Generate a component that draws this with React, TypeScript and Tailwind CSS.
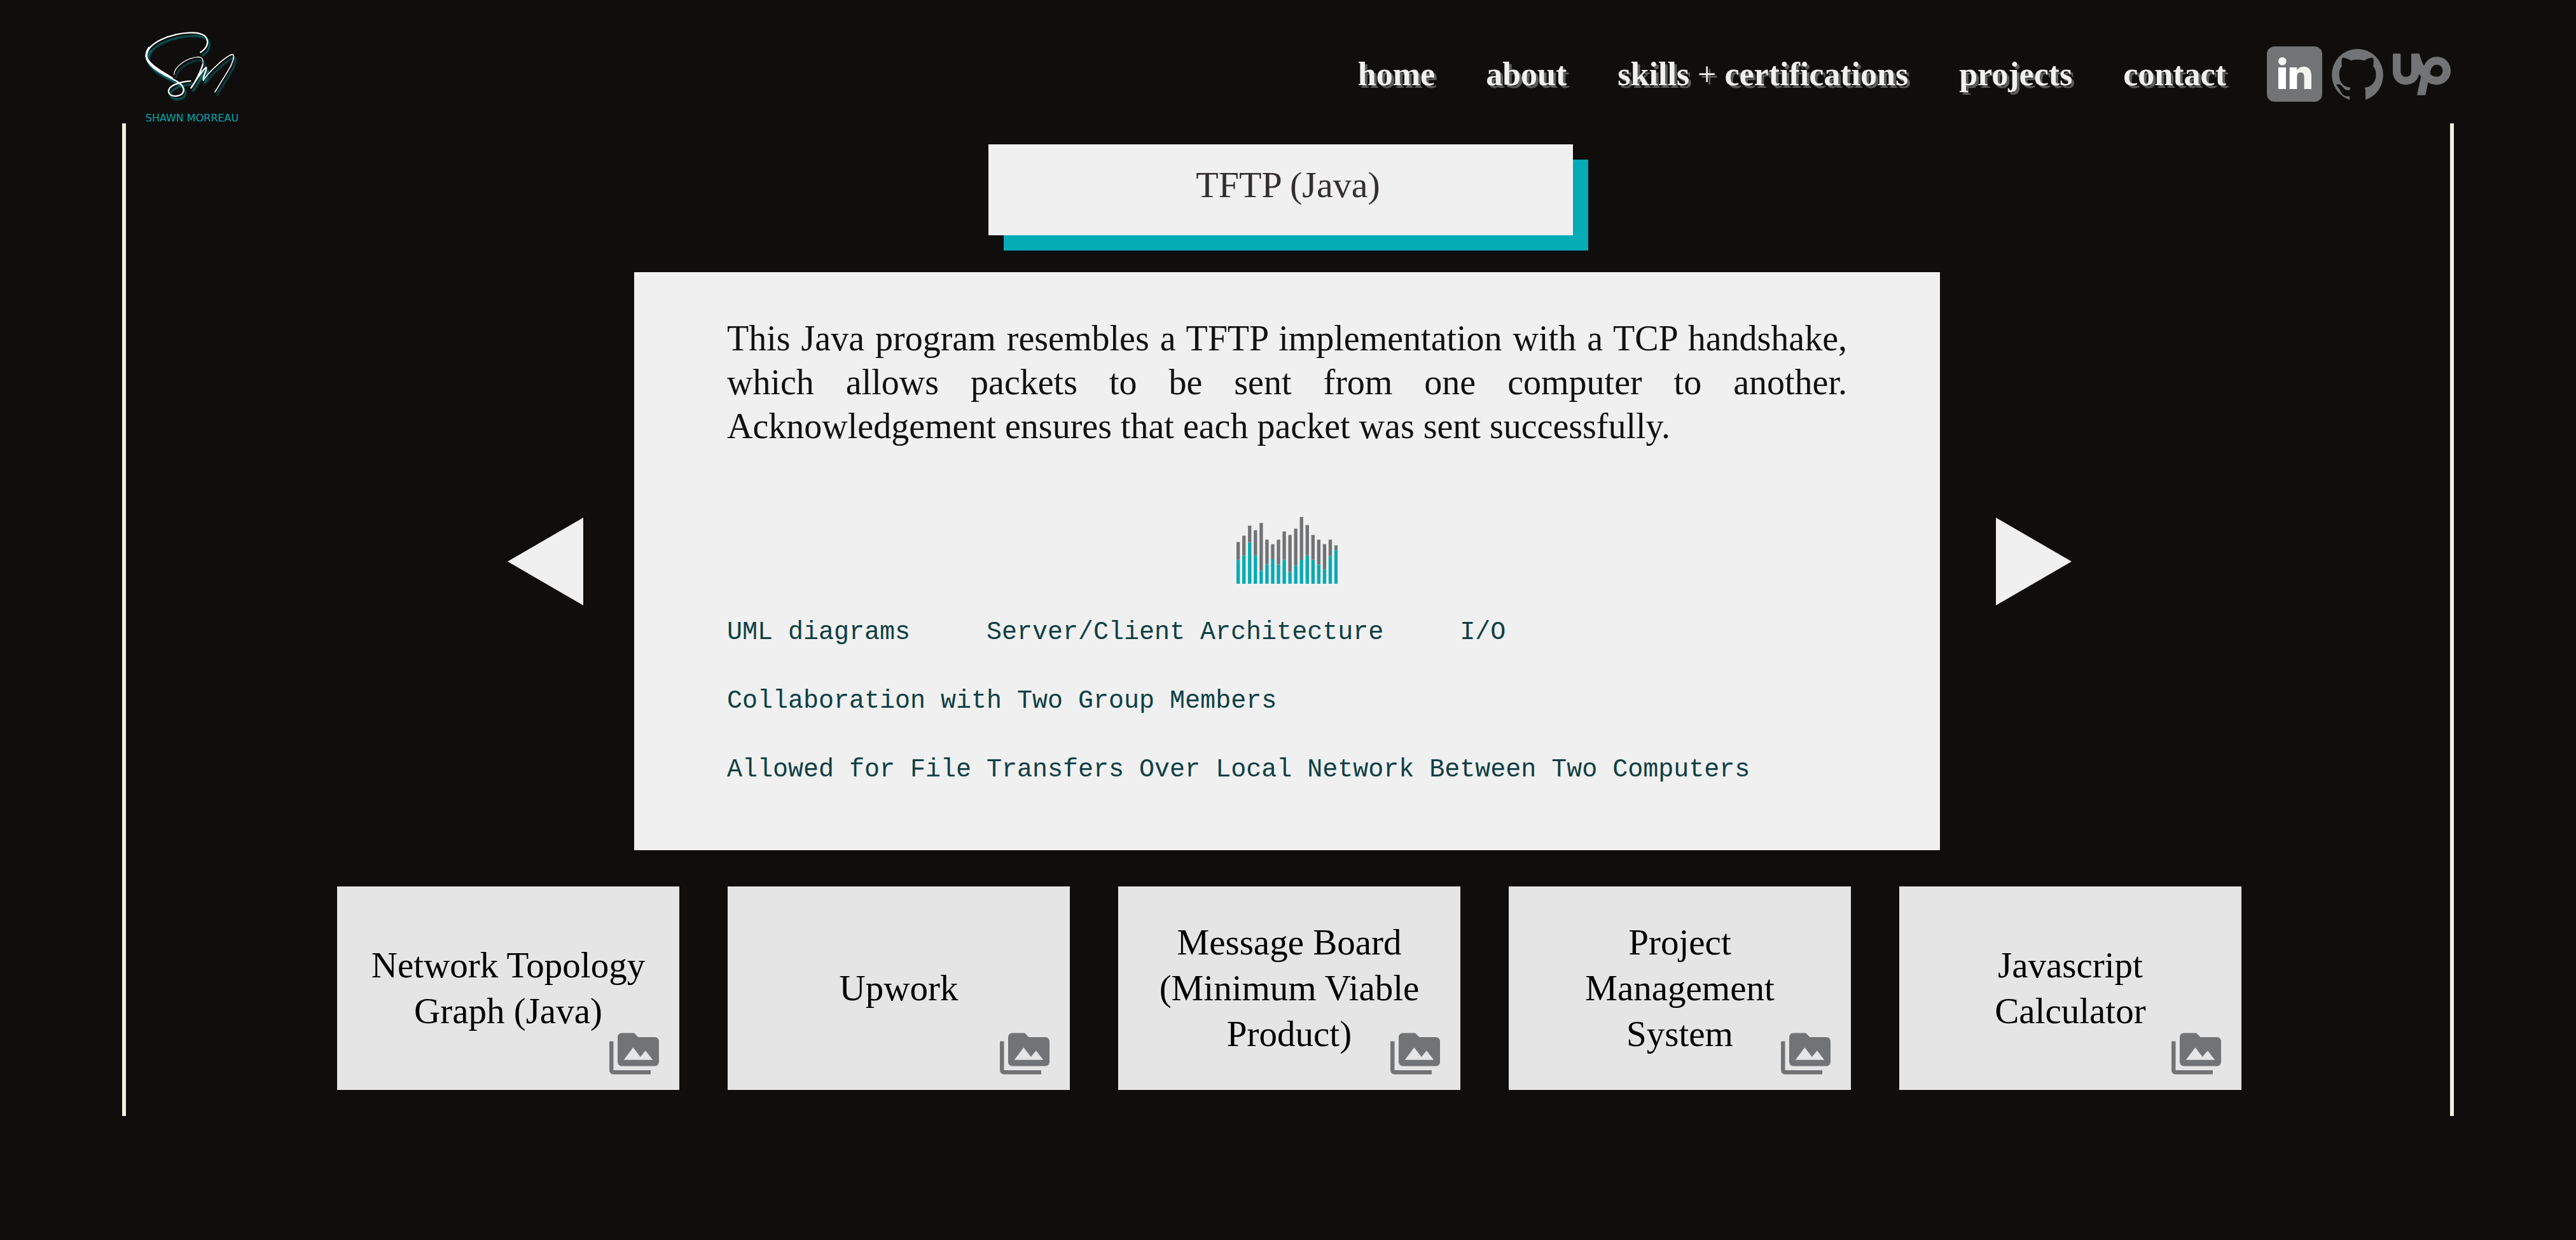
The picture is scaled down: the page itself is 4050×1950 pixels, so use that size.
import { MdPermMedia } from "react-icons/md";

const navLinks = ["home", "about", "skills + certifications", "projects", "contact"];

const skills = [
  "UML diagrams",
  "Server/Client Architecture",
  "I/O",
  "Collaboration with Two Group Members",
  "Allowed for File Transfers Over Local Network Between Two Computers",
];

const projects = [
  "Network Topology Graph (Java)",
  "Upwork",
  "Message Board (Minimum Viable Product)",
  "Project Management System",
  "Javascript Calculator",
];

// [top of the bar, top of its teal part]
const bars = [
  [216, 301], [186, 280], [139, 217], [160, 280], [126, 352], [205, 322],
  [226, 296], [205, 322], [166, 301], [183, 358], [153, 328], [98, 299],
  [136, 280], [183, 301], [205, 322], [226, 346], [205, 283], [232, 253],
];

function Logo() {
  return (
    <a href="#home" aria-label="Shawn Morreau, home" className="flex flex-col items-center gap-[18px] pt-12">
      <svg
        viewBox="168 84 456 336"
        fill="none"
        stroke="#ffffff"
        strokeLinecap="round"
        strokeLinejoin="round"
        className="h-28 w-[152px] drop-shadow-[3px_5px_1px_#07767c]"
      >
        <path
          strokeWidth="7"
          d="M436 187C462 170 471 150 468 132C464 105 440 94 392 94C300 96 182 140 180 206C182 262 285 298 330 328C364 350 368 388 322 393C278 396 272 358 312 340C335 330 362 324 388 322"
        />
        <path strokeWidth="10" d="M193 166C183 180 180 192 180 206C183 238 240 272 300 308" />
        <path strokeWidth="4" d="M311 291C312 255 370 212 425 209C448 210 450 228 446 245" />
        <path strokeWidth="7" d="M446 245C438 275 410 330 391 355C410 325 450 265 463 258C466 275 446 300 449 318" />
        <path strokeWidth="5" d="M449 318C470 285 560 198 588 197C598 203 588 240 565 275L504 374" />
      </svg>
      <span className="font-['DejaVu_Sans',sans-serif] text-base/4 whitespace-nowrap text-[#05a3ac]">SHAWN MORREAU</span>
    </a>
  );
}

function LinkedInIcon() {
  return (
    <svg viewBox="42 39 261 261" className="size-[87px]">
      <rect x="42" y="39" width="261" height="261" rx="36" fill="#727375" />
      <circle cx="115" cy="109" r="19" fill="#f4f5ee" />
      <path fill="#ffffff" d="M96 138h36v102H96zM149 138h35v102h-35z" />
      <path
        fill="#f4f5ee"
        d="M183 152C190 140 202 134 215 134C240 134 252 150 252 178V240H218V184C218 170 214 161 201 161C189 161 184 170 184 184Z"
      />
    </svg>
  );
}

function GitHubIcon() {
  return (
    <svg viewBox="347 50 244 242" className="h-20 w-[81px]" fill="#727375">
      <path d="M507 292V250C507 244 505 238 503 234C540 228 557 205 557 170C557 155 552 142 543 131C546 120 547 108 543 93C540 90 528 90 500 105C480 99 458 99 438 105C410 90 398 90 396 93C392 108 392 120 395 131C386 142 382 155 382 170C382 210 400 229 436 234C434 238 433 242 432 246C424 247 412 246 405 238C396 226 388 218 376 218C369 218 368 224 372 228C384 236 386 252 396 264C404 275 418 276 432 275V292C385 276 347 232 347 172A122 122 0 0 1 591 172C591 230 555 277 507 292Z" />
    </svg>
  );
}

function UpworkIcon() {
  return (
    <svg viewBox="636 72 273 197" className="h-[66px] w-[91px]" fill="#727375" fillRule="evenodd">
      <path d="M636 76Q636 72 640 72H669Q673 72 673 76V156C673 172 684 182 698 182C713 182 723 172 723 156V76Q723 72 727 72H761C766 92 773 113 783 130C794 104 815 87 844 87C881 87 909 116 909 153C909 190 880 219 843 219C827 219 813 215 802 207L791 265Q790 269 786 269H750L769 180C766 177 763 173 760 169C754 200 730 219 698 219C662 219 636 193 636 156ZM844 125C824 125 814 142 812 168C820 177 830 181 843 181C860 181 871 169 871 153C871 137 860 125 844 125Z" />
    </svg>
  );
}

function Header() {
  return (
    <header className="flex items-start justify-between pr-[197px] pl-[226px]">
      <Logo />
      <div className="flex items-center gap-16 pt-[73px]">
        <nav className="flex items-center gap-20">
          {navLinks.map((label) => (
            <a
              key={label}
              href={`#${label.split(" ")[0]}`}
              className="text-[52px]/[64px] font-bold whitespace-nowrap text-[#f0f0f0] [text-shadow:4px_4px_0_#5c5c5a]"
            >
              {label.split("+").map((part, i) => (
                <span key={part}>
                  {i > 0 && <span className="font-normal">+</span>}
                  {part}
                </span>
              ))}
            </a>
          ))}
        </nav>
        <div className="flex items-center gap-[15px]">
          <a href="#linkedin" aria-label="LinkedIn"><LinkedInIcon /></a>
          <a href="#github" aria-label="GitHub"><GitHubIcon /></a>
          <a href="#upwork" aria-label="Upwork"><UpworkIcon /></a>
        </div>
      </div>
    </header>
  );
}

function BarsGraphic() {
  return (
    <svg viewBox="135 98 477 315" className="mx-auto mt-[108px] h-[105px] w-[159px]" aria-hidden="true">
      {bars.map(([top, mid], i) => (
        <g key={i}>
          <rect x={135 + i * 27.15} y={top} width="16" height={mid - top} fill="#727375" />
          <rect x={135 + i * 27.15} y={mid} width="16" height={413 - mid} fill="#05abb5" />
        </g>
      ))}
    </svg>
  );
}

export default function App() {
  return (
    <div className="min-h-screen bg-[#0f0e0c] font-['Liberation_Serif',serif]">
      <Header />
      <main className="mx-48 border-x-[6px] border-[#f3efdf] pt-[33px] pb-[41px]">
        <div className="mx-auto w-full max-w-[943px] pr-6">
          <h1 className="bg-[#f0f0f0] pt-7 pb-[43px] pl-6 text-center text-[58px]/[72px] text-[#332f30] shadow-[24px_24px_0_#05abb5]">
            TFTP (Java)
          </h1>
        </div>

        <section className="mt-[58px] grid grid-cols-[1fr_minmax(0,2053px)_1fr] items-center pr-[3px]">
          <button type="button" aria-label="Previous project" className="mr-20 justify-self-end">
            <svg viewBox="0 0 119 138" className="h-[138px] w-[119px]" fill="#f0f0f0"><path d="M119 0V138L0 69Z" /></svg>
          </button>
          <article className="bg-[#f0f0f0] px-[146px] pt-[70px] pb-[102px]">
            <p className="text-justify text-[56px]/[69px] text-[#111111]">
              This Java program resembles a TFTP implementation with a TCP handshake, which allows packets to be sent
              from one computer to another. Acknowledgement ensures that each packet was sent successfully.
            </p>
            <BarsGraphic />
            <ul className="mt-[53px] flex flex-wrap gap-x-[120px] gap-y-[60px] font-['Liberation_Mono',monospace] text-[40px]/[48px] text-[#0e3f44]">
              {skills.map((skill) => (
                <li key={skill}>{skill}</li>
              ))}
            </ul>
          </article>
          <button type="button" aria-label="Next project" className="ml-[88px] justify-self-start">
            <svg viewBox="0 0 119 138" className="h-[138px] w-[119px]" fill="#f0f0f0"><path d="M0 0V138L119 69Z" /></svg>
          </button>
        </section>

        <section className="mt-[57px] grid grid-cols-5 gap-[76px] pr-[328px] pl-[332px]">
          {projects.map((name) => (
            <button
              key={name}
              type="button"
              className="relative flex min-h-80 items-center justify-center bg-[#e5e5e5] px-12 py-6 text-center text-[57px]/[72px] text-black"
            >
              {name}
              <MdPermMedia className="absolute right-8 bottom-[18px] size-[78px] text-[#727375]" />
            </button>
          ))}
        </section>
      </main>
    </div>
  );
}
